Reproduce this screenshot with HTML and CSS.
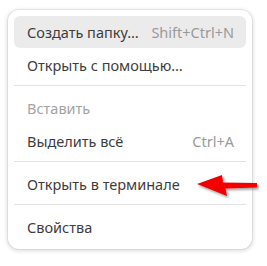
FILE: index.html
```html
<!DOCTYPE html>
<html lang="ru">
<head>
<meta charset="UTF-8" />
<title>Контекстное меню</title>
<link rel="stylesheet" href="styles.css">
</head>
<body>
  <div class="menu">
    <div class="item active">
      <span>Создать папку…</span>
      <span class="accel">Shift+Ctrl+N</span>
    </div>
    <div class="item">
      <span>Открыть с помощью…</span>
    </div>
    <div class="sep"></div>
    <div class="item disabled">
      <span>Вставить</span>
    </div>
    <div class="item">
      <span>Выделить всё</span>
      <span class="accel">Ctrl+A</span>
    </div>
    <div class="sep"></div>
    <div class="item">
      <span>Открыть в терминале</span>
    </div>
    <div class="sep"></div>
    <div class="item">
      <span>Свойства</span>
    </div>
  </div>

  <!-- red pointer arrow drawn over the menu -->
  <svg class="arrow" width="77" height="40" viewBox="0 0 77 40">
    <defs>
      <filter id="shadow" x="-20%" y="-30%" width="150%" height="180%">
        <feDropShadow dx="1.5" dy="2" stdDeviation="1.2" flood-color="#000" flood-opacity="0.35"/>
      </filter>
    </defs>
    <polygon points="7,14 32,5 33,12.5 67,13 67,17.5 35.5,18.5 37,26" fill="#f20000" filter="url(#shadow)"/>
  </svg>
</body>
</html>
```

FILE: styles.css
```css
body {
  margin: 0;
  background: #fff;
  font-family: "Noto Sans", sans-serif;
  font-size: 14.5px;
  color: #3d3d3d;
  width: 267px;
  height: 266px;
  position: relative;
}
.menu {
  position: relative;
  margin: 10px 0 0 8px;
  width: 232px;
  padding: 6px;
  background: #fff;
  border-radius: 11px;
  box-shadow: 0 0 0 1px rgba(0, 0, 0, 0.05), 0 1px 4px 1px rgba(0, 0, 0, 0.14);
}
.item {
  display: flex;
  align-items: center;
  justify-content: space-between;
  height: 32px;
  margin-bottom: 1px;
  padding: 0 12px 0 13px;
  border-radius: 6px;
}
.item:last-child {
  margin-bottom: 0;
}
.item.active {
  background: #ebebeb;
}
.item.disabled {
  color: #a3a3a3;
}
.accel {
  color: #9a9a9a;
}
.sep {
  height: 1px;
  background: #e3e3e3;
  margin: 4px 0 6px;
}
.arrow {
  position: absolute;
  left: 190px;
  top: 170px;
}
```
